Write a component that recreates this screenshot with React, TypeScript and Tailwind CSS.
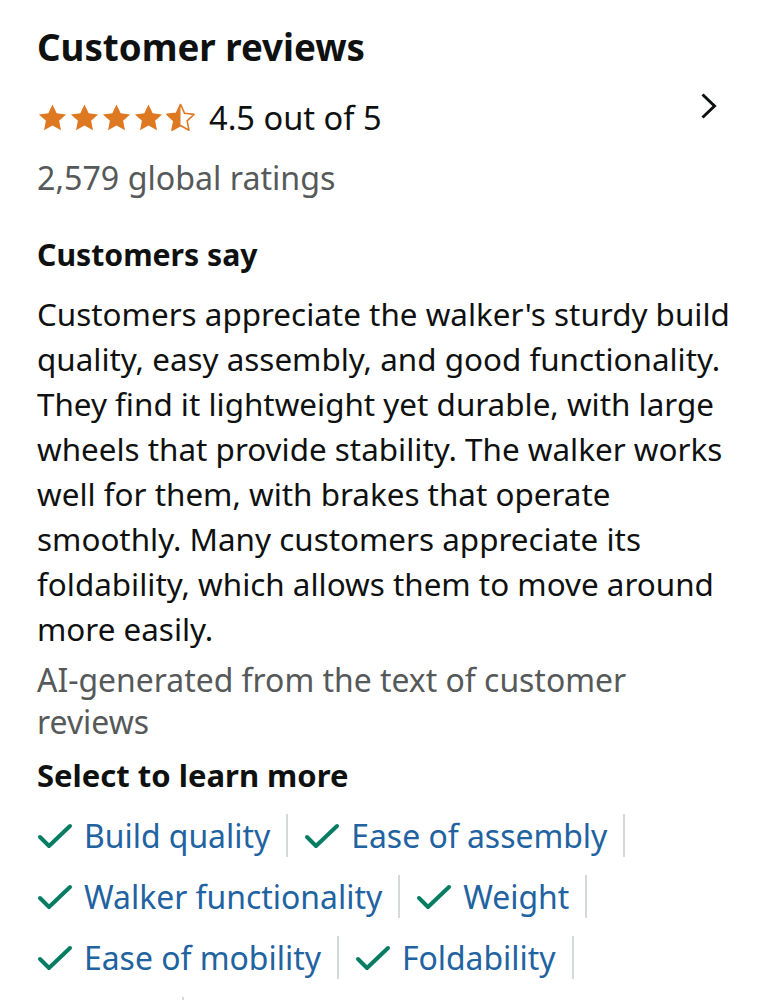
import React from "react";

const paragraph = [
  "Customers appreciate the walker's sturdy build",
  "quality, easy assembly, and good functionality.",
  "They find it lightweight yet durable, with large",
  "wheels that provide stability. The walker works",
  "well for them, with brakes that operate",
  "smoothly. Many customers appreciate its",
  "foldability, which allows them to move around",
  "more easily.",
];

const rows = [
  ["Build quality", "Ease of assembly"],
  ["Walker functionality", "Weight"],
  ["Ease of mobility", "Foldability"],
  ["Value"],
];

const STAR = "M12 1l3.2 6.9 7.3.8-5.4 5 1.5 7.3L12 17.3 5.4 21 6.9 13.7 1.5 8.7l7.3-.8z";

function Stars() {
  return (
    <div className="flex items-center gap-[1px]">
      {[0, 1, 2, 3].map((i) => (
        <svg key={i} width="31" height="30" viewBox="0 0 24 23">
          <path d={STAR} fill="#de7921" />
        </svg>
      ))}
      <svg width="31" height="30" viewBox="0 0 24 23">
        <defs>
          <clipPath id="half">
            <rect x="0" y="0" width="12" height="24" />
          </clipPath>
        </defs>
        <path d={STAR} fill="none" stroke="#de7921" strokeWidth="1.2" strokeLinejoin="round" />
        <path d={STAR} fill="#de7921" clipPath="url(#half)" />
      </svg>
    </div>
  );
}

function Check() {
  return (
    <svg width="36" height="26" viewBox="0 0 36 26" className="shrink-0">
      <path d="M3 14l9 9L33 3" fill="none" stroke="#067d62" strokeWidth="4" strokeLinecap="round" strokeLinejoin="round" />
    </svg>
  );
}

function Chip({ label, first }: { label: string; first: boolean }) {
  return (
    <div className={`flex items-center ${first ? "" : "pl-[16px]"}`}>
      <Check />
      <span className="ml-[11px] text-[31.9px] leading-[43px] text-[#2162a1] whitespace-nowrap">{label}</span>
      <span className="ml-[16px] w-[2px] h-[43px] bg-[#d5d9d9]" />
    </div>
  );
}

export default function App() {
  return (
    <div
      className="w-[763px] h-[1000px] overflow-hidden bg-white text-[#0f1111] px-[37px] pt-[23px]"
      style={{ fontFamily: '"Noto Sans", "Open Sans", sans-serif' }}
    >
      <h2 className="text-[36.7px] leading-[48px] font-bold">Customer reviews</h2>

      <div className="mt-[23px] h-[48px] flex items-center justify-between">
        <div className="flex items-center">
          <Stars />
          <span className="ml-[13px] text-[32.6px] leading-[48px]">4.5 out of 5</span>
        </div>
        <svg width="18" height="28" viewBox="0 0 18 28" className="mr-[8px] -mt-[24px]">
          <path d="M2.5 2.5l12 11.5-12 11.5" fill="none" stroke="#0f1111" strokeWidth="3" />
        </svg>
      </div>

      <div className="mt-[14px] text-[32.2px] leading-[44px] text-[#565959]">2,579 global ratings</div>

      <h3 className="mt-[33px] text-[30.2px] leading-[44px] font-bold">Customers say</h3>

      <p className="mt-[14px] text-[31.4px] leading-[45px]">
        {paragraph.map((l) => (
          <span key={l} className="block whitespace-nowrap">{l}</span>
        ))}
      </p>

      <p className="mt-[8px] text-[31.9px] leading-[42px] text-[#565959]">
        <span className="block whitespace-nowrap">AI-generated from the text of customer</span>
        <span className="block">reviews</span>
      </p>

      <h3 className="mt-[10px] text-[31px] leading-[44px] font-bold">Select to learn more</h3>

      <div className="mt-[8px] flex flex-col">
        {rows.map((r, i) => (
          <div key={i} className="h-[61px] flex items-center">
            {r.map((label, j) => (
              <Chip key={label} label={label} first={j === 0} />
            ))}
          </div>
        ))}
      </div>
    </div>
  );
}
